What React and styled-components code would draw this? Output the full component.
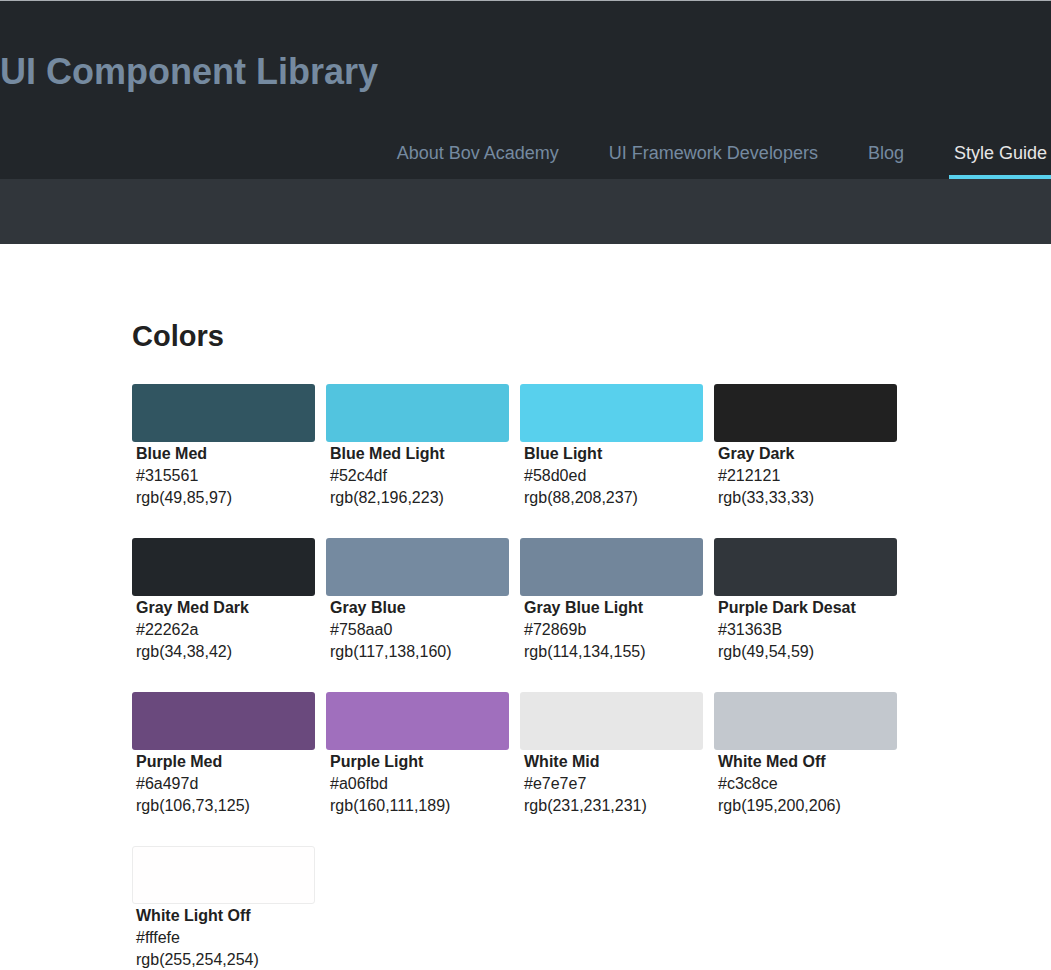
import React from "react";
import styled, { createGlobalStyle } from "styled-components";

const colors = [
  { name: "Blue Med", hex: "#315561", rgb: "rgb(49,85,97)" },
  { name: "Blue Med Light", hex: "#52c4df", rgb: "rgb(82,196,223)" },
  { name: "Blue Light", hex: "#58d0ed", rgb: "rgb(88,208,237)" },
  { name: "Gray Dark", hex: "#212121", rgb: "rgb(33,33,33)" },
  { name: "Gray Med Dark", hex: "#22262a", rgb: "rgb(34,38,42)" },
  { name: "Gray Blue", hex: "#758aa0", rgb: "rgb(117,138,160)" },
  { name: "Gray Blue Light", hex: "#72869b", rgb: "rgb(114,134,155)" },
  { name: "Purple Dark Desat", hex: "#31363B", rgb: "rgb(49,54,59)" },
  { name: "Purple Med", hex: "#6a497d", rgb: "rgb(106,73,125)" },
  { name: "Purple Light", hex: "#a06fbd", rgb: "rgb(160,111,189)" },
  { name: "White Mid", hex: "#e7e7e7", rgb: "rgb(231,231,231)" },
  { name: "White Med Off", hex: "#c3c8ce", rgb: "rgb(195,200,206)" },
  { name: "White Light Off", hex: "#fffefe", rgb: "rgb(255,254,254)", outlined: true },
];

const links = [
  { title: "About Bov Academy" },
  { title: "UI Framework Developers" },
  { title: "Blog" },
  { title: "Style Guide", active: true },
];

const GlobalStyle = createGlobalStyle`
  body {
    margin: 0;
    background: #fff;
    font-family: "Liberation Sans", Arial, sans-serif;
    color: #212121;
  }
`;

const App = () => {
  return (
    <>
      <GlobalStyle />
      <Header>
        <Title>UI Component Library</Title>
        <Nav>
          {links.map((link) => (
            <NavLink key={link.title} href="#" $active={link.active}>
              {link.title}
            </NavLink>
          ))}
        </Nav>
      </Header>
      <Band />
      <Main>
        <Heading>Colors</Heading>
        <Grid>
          {colors.map((c) => (
            <Card key={c.name}>
              <Swatch $color={c.hex} $outlined={c.outlined} />
              <Info>
                <Name>{c.name}</Name>
                <p>{c.hex}</p>
                <p>{c.rgb}</p>
              </Info>
            </Card>
          ))}
        </Grid>
      </Main>
    </>
  );
};

const Header = styled.header`
  background: #22262a;
  border-top: 1px solid #a9adb2;
  padding-top: 50px;
  display: flex;
  flex-direction: column;
`;

const Title = styled.h1`
  margin: 0;
  font-size: 36px;
  line-height: 41px;
  font-weight: 700;
  color: #758aa0;
`;

const Nav = styled.nav`
  margin-top: 50px;
  display: flex;
  justify-content: flex-end;
  gap: 41px;
`;

const NavLink = styled.a`
  display: block;
  padding: 0 4px 11px 5px;
  font-size: 18px;
  line-height: 22px;
  text-decoration: none;
  color: ${(p) => (p.$active ? "#e7e7e7" : "#758aa0")};
  border-bottom: 4px solid ${(p) => (p.$active ? "#58d0ed" : "transparent")};
`;

const Band = styled.div`
  height: 65px;
  background: #31363b;
`;

const Main = styled.main`
  padding: 76px 0 40px 132px;
`;

const Heading = styled.h2`
  margin: 0 0 31px;
  font-size: 29px;
  line-height: 33px;
  font-weight: 700;
  color: #212121;
`;

const Grid = styled.div`
  display: grid;
  grid-template-columns: repeat(4, 183px);
  column-gap: 11px;
  row-gap: 29px;
`;

const Card = styled.div`
  display: flex;
  flex-direction: column;
`;

const Swatch = styled.div`
  height: 58px;
  border-radius: 3px;
  background: ${(p) => p.$color};
  box-sizing: border-box;
  border: ${(p) => (p.$outlined ? "1px solid #ececec" : "none")};
`;

const Info = styled.div`
  padding: 1px 0 0 4px;
  font-size: 16px;
  line-height: 22px;

  p {
    margin: 0;
    color: #222;
  }
`;

const Name = styled.p`
  && {
    font-weight: 700;
    color: #212121;
  }
`;

export default App;
